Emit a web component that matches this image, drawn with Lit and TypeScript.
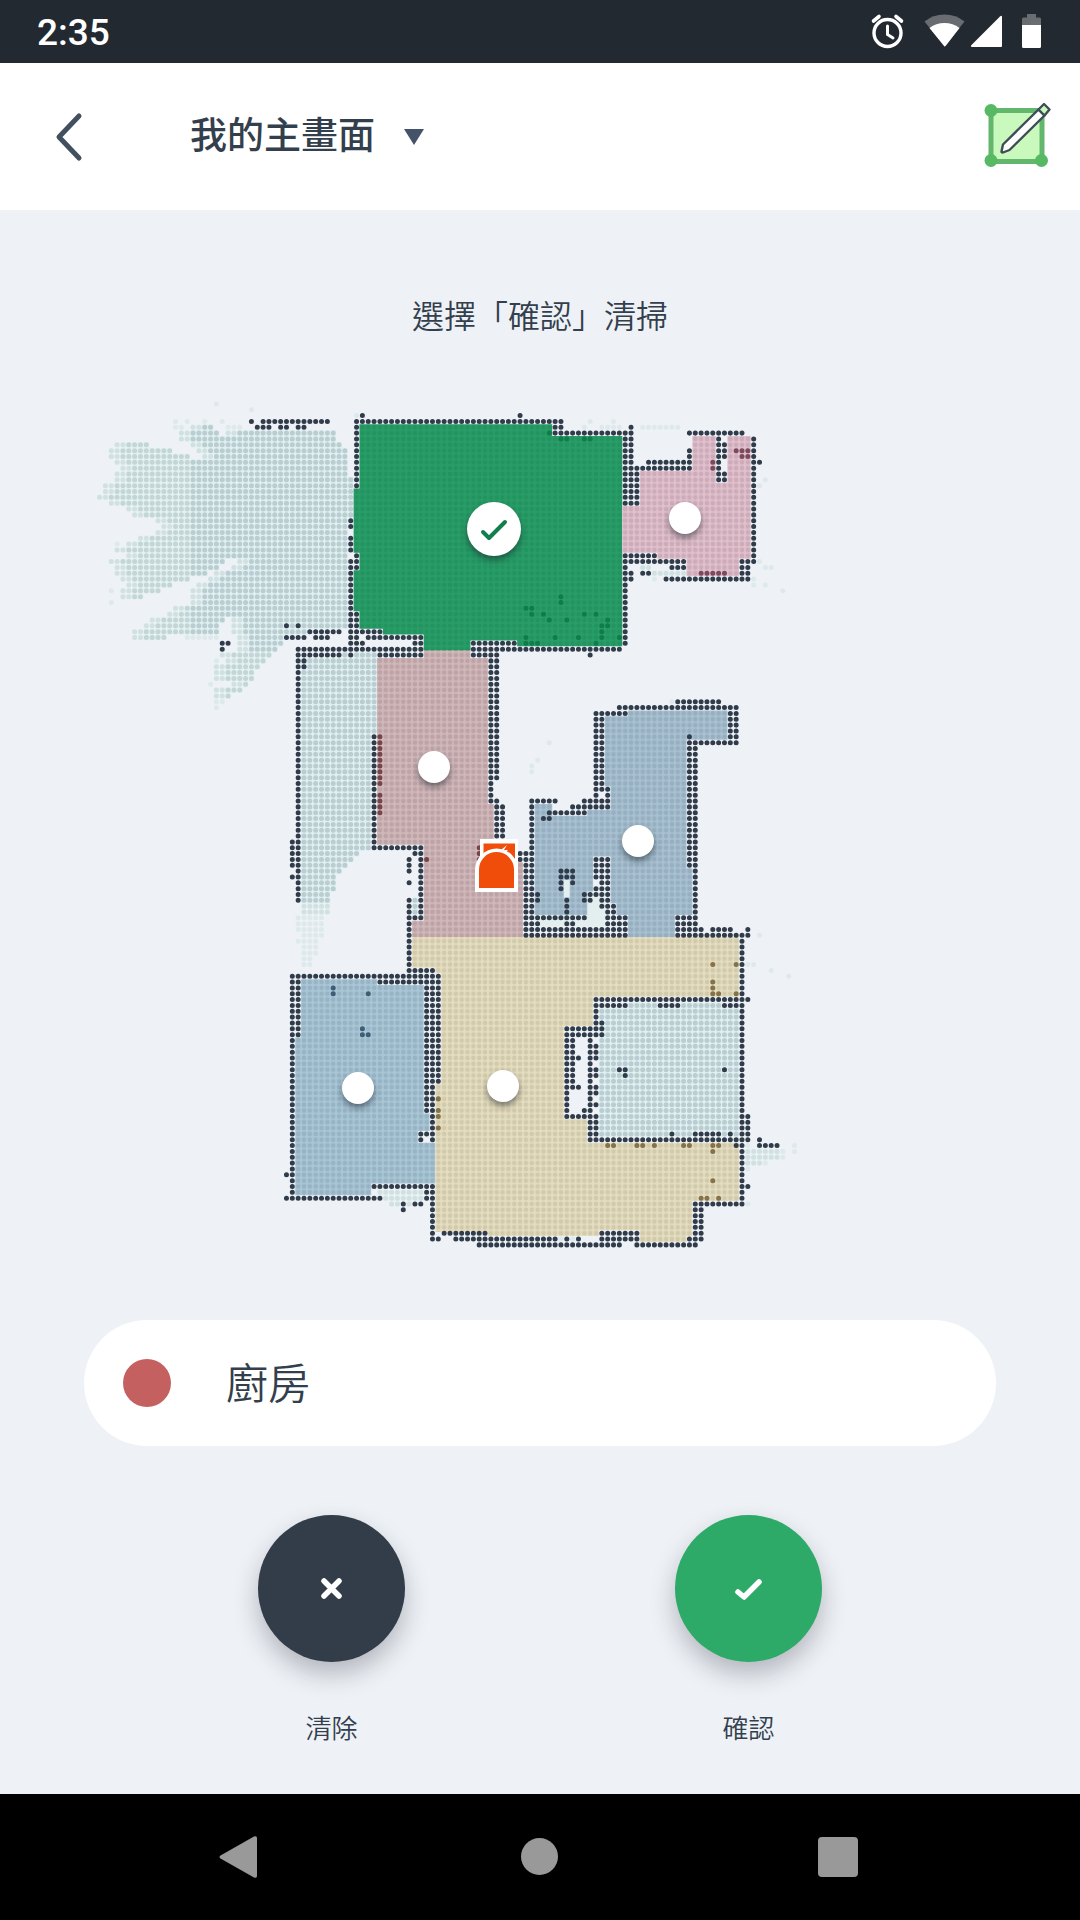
import { LitElement, html, css, svg } from "lit";
import { customElement, property, state } from "lit/decorators.js";
import { classMap } from "lit/directives/class-map.js";
import { styleMap } from "lit/directives/style-map.js";

// The floor plan is a grid of square cells. A line is "rows: columns", listing the filled ranges.
type Cell = [number, number];

function parseRuns(source: string): Cell[][] {
  const runs: Cell[][] = [];
  for (const line of source.trim().split("\n")) {
    const [rows, cols] = line.split(":");
    const [r0, r1 = r0] = rows.trim().split("-").map(Number);
    for (let r = r0; r <= r1; r++) {
      for (const part of cols.trim().split(/\s+/)) {
        const [c0, c1 = c0] = part.split("-").map(Number);
        const run: Cell[] = [];
        for (let c = c0; c <= c1; c++) run.push([c, r]);
        runs.push(run);
      }
    }
  }
  return runs;
}

const dots = (cells: Cell[]) => cells.map(([c, r]) => `M${c + 0.5} ${r + 0.5}h0`).join("");
const squares = (cells: Cell[]) => cells.map(([c, r]) => `M${c} ${r}h1v1h-1z`).join("");

const WALLS = parseRuns(`
2: 47 74
3: 28 30-41 46-81
4: 29-31 33-34 36-37 80-81 93
5: 80-93 103-112
4-14: 46
6-17: 92-93
11-17: 94
10: 96-103
11: 95-103
8-9: 103
6-13: 108
7-9: 109
12-13: 109
6-27: 114
10: 115
20-21: 45
23-25: 45
26-28: 46
27-43: 45
36-41: 46
26: 92-97
27: 92-102 112-113
28: 92 100-102 112-113
29: 92-93 95-96 112-113
30: 92-93 99-113
31-41: 92
38: 34 36
39: 38-43 47-50
40: 34-37 39-41 48-57
41: 23-24 47 56-57 66-73
42: 23 36-57 66-91
43: 36-43 50-57 66-70 86
44-45: 36-37
46-85: 36
44-64: 69-70
65-67: 69
68: 69-70
69-74: 70-71
75-79: 35
81: 35
57-76: 49
76: 50-57
77: 56
77-88: 57
78-80: 55
82: 55
85-97: 55
88: 56
97: 56-59
77-78: 74
77-91: 75
68-91: 76
51: 101-108
52: 91-111
53: 87-92
54-65: 87-88
53-58: 110-111
57: 103
58: 103-109
59-79: 103-104
80-91: 104
66: 87-89
67: 87 89
68: 77-80 85-89
69: 83-89
70: 79-85
71: 78-79
78-81: 87-89
80-81: 81-83
82: 81 83 88-89
83: 81 87-89
84: 77 85-89
85: 77 85-86 88-89
86: 88-90
87: 89-90
88: 77-85 89-92 101-103
89: 77 82-83 89-92 101-103
90: 77-92 101-103 105 107-110 113
91: 77-92 101-103 105-113
85-87: 82
92-137: 112
98: 35-60
99: 35-36 50-60
100-108: 35-36
109-136: 35
100-116: 58-60
117-121: 58-59
122-124: 59
125: 57-59
126: 57 59
132: 34
134: 49-59
135: 58-59
136: 34 36-50 58-59
137: 54 56-57 59
138: 54 59
139-143: 59
142: 61-68
143: 60 63-80 82 84
144: 67-91 94-104
142-143: 88-94
143: 103
137: 104-111
138-143: 104-105
102: 87-111 113
103: 87-92 98-101 109-111
104-105: 87
106: 87-88
107-108: 82-88
109: 82-83 86
110-111: 82-83 86-87
112: 82-84 86-87
113: 82-83 86
114: 82-83 86-87 91-92 109
115: 82-83 86-87 92
116: 82-83 86
117: 82-84 86-87
118: 82 86-87
119: 82 86
120: 82 86-87
121: 82 85-86
122: 82-87 113
123-124: 86-87 113
125: 86-87 100 104-108 110 113
126: 86-111 113 115
127: 111 115-118
134: 113
`).flat();

// Obstacles that stand inside a coloured room.
const OBSTACLES: Array<[string, string]> = [
  ["green", `
5: 79
6: 81-82 85-86
33-34: 81
35: 75-76
36: 76 78 85 87
37: 79 82 89
38: 88-89
39: 88
40: 75 80 84 88 91
41: 75-77 87`],
  ["pink", `
8: 111-113
9: 112-113
10-11: 107
29: 105-109`],
  ["red", `
57-65: 50
67-70: 50
76-78: 67
78: 58`],
  ["steel", `
100: 42
101: 42 48
107: 47
108: 47-48`],
  ["sand", `
96: 107 111
99-100: 107
101: 107-108 111
119: 60
121-122: 60
124: 60
127: 89-90 94-95 97 102-103 107-108
128: 107
133: 107
136: 105-106 108`],
];

// Scanned floor that belongs to no room: each run thins out at its left end.
const OPEN_FLOOR = parseRuns(`
4: 18-21
5: 16-22 24-42
6: 16-42
7: 5-10 18-43
8: 4-14 19-44
9: 4-17 20-44
10: 5-44
11: 6-44
12: 5-44
13: 5-45
14-15: 3-45
16: 2-45
17: 4-45
18: 7-45
19: 8-45
20: 12-44
21: 13-44
22: 12-44
23: 9-44
24: 7-44
25: 5-44
26: 7-44
27: 4-23 26-44
28: 5-22 25-44
29: 5-20 22-44
30: 6-17 21-44
31: 7-14 19-44
32: 6-12 18-44
33: 6-9 18-44
34: 18-44
35: 15-44
36: 14-44
37: 11-23 25-44
38: 10-22 25-44
39: 8-22 25-37
40: 8-13 26-33
41: 26-33
42: 26-32
43: 23-31
44: 24-30
45: 22-29
46: 22-28
47: 22-28
48: 25-27
49: 22-26
50: 22-24
`);

const CLOSED_FLOOR = parseRuns(`
43: 44 46-49
44-56: 37-49
57-75: 37-48
76: 37-48
77: 37-46
78: 37-45
79: 37-44
80: 37-43
81-83: 37-42
84-85: 37-41
103: 93-97 102-108
104-124: 88-111
125: 88-99 101-103 109 111
85-87: 56
`).flat();

const TRAILING = parseRuns(`
28: 95-96
29: 97-102
86-87: 37-41
128: 113-118
129: 113-118
130: 113-115
135: 50-57
136: 51-57
137: 52-53 55
`).flat();

const FAINT = parseRuns(`
0: 22
1: 28
2: 46
3: 15 17 20 23 86 90
4: 15-16 24-26 85 88-91 95-101
13: 116
14: 115
24: 5
27: 115
28: 116-117
30: 97 114
31: 114 116
32: 4 119
34: 4
40: 17-22
44: 22
48: 21
51: 22-23
52: 22
51: 100
58: 79
61: 77
62-63: 76
88-90: 36-40
91: 37-40
92: 36-39
93-94: 37-39
95-96: 37-38
91: 115
96: 113-114
97: 117
98: 120
127: 113 121
128: 119 121
129: 119
130: 116
131: 113
137: 112-113
143: 81 83
146: 105
`).flat();

const THIN = OPEN_FLOOR.flatMap((run) => run.slice(0, 2)).concat(TRAILING);
const INNER = OPEN_FLOOR.flatMap((run) => run.slice(2));
const SOFT = INNER.filter(([c, r]) => c < 18 || r > 42);
const DENSE = INNER.filter(([c, r]) => c >= 18 && r <= 42).concat(CLOSED_FLOOR);

interface Room {
  tone: string;
  name: string;
  outline: string;
  x: number;
  y: number;
}

const ROOMS: Room[] = [
  { tone: "red", name: "走廊", x: 434, y: 366, outline: "M58 42H66V44H69V69H70V75H73V79H75V91.8H56V89H58V76H50V44H58Z" },
  { tone: "green", name: "廚房", x: 494, y: 128, outline: "M47 4H80V6H92V42H74V41H66V42.7H58V40H51V39H47V36H46V29H47V26H46V15H47Z" },
  { tone: "pink", name: "浴室", x: 685, y: 117, outline: "M104 6H108V14H110V6H114V27H112V30H103V27H98V26H92V18H95V12H104Z" },
  { tone: "slate", name: "臥室", x: 638, y: 440, outline: "M93 53H110V58H103V80H104V88H101V91.8H93V88H91V86H90V78H87V84H86V88H77V69H80V71H86V70H90V66H89V54H93Z" },
  { tone: "steel", name: "書房", x: 358, y: 687, outline: "M37 99H50V100H58V122H59V125H57V127H60V134H49V136H36V109H37Z" },
  { tone: "sand", name: "客廳", x: 503, y: 685, outline: "M56 91.8H112V102H87V107H82V123H86V127H112V137H104V143H103V144H95V142H88V143H69V142.3H60V117H61V98H60V97H56Z" },
];

const MAP_WIDTH = 1080;
const MAP_HEIGHT = 850;

@customElement("floor-map")
class FloorMap extends LitElement {
  @property({ attribute: false }) selected = new Set<string>();

  static styles = css`
    :host { display: block; position: relative; }
    .plan { display: block; width: 100%; height: auto; }
    .dots { fill: none; stroke-width: 0.86; stroke-linecap: round; }
    .wall { stroke: #313c4b; }
    .dense-floor { fill: #e0f0f2; }
    .dense-dot { stroke: #bacdd0; }
    .soft-floor { fill: #e4f1f2; }
    .soft-dot { stroke: #c3d6d5; }
    .thin-floor { fill: #e9f2f4; }
    .thin-dot { stroke: #d1e0e0; }
    .faint-dot { stroke: #d3e2e3; opacity: 0.6; }
    .gap { fill: #e2efee; }
    .area.green { fill: #289d69; }
    .area.pink { fill: #dfc0cc; }
    .area.red { fill: #d0b8ba; }
    .area.slate { fill: #a8c0d0; }
    .area.steel { fill: #a8c6d6; }
    .area.sand { fill: #e5ddbf; }
    .grain-green { fill: #24945f; }
    .grain-pink { fill: #cdabb8; }
    .grain-red { fill: #bea3a6; }
    .grain-slate { fill: #96afc1; }
    .grain-steel { fill: #97b3c4; }
    .grain-sand { fill: #d2caac; }
    .obstacle.green { stroke: #0f7c4a; }
    .obstacle.pink { stroke: #7d4a5c; }
    .obstacle.red { stroke: #764449; }
    .obstacle.steel { stroke: #3c5f77; }
    .obstacle.sand { stroke: #84734a; }
    .halo { fill: #fff; }
    .robot { fill: #f04d0a; }
    .pin {
      position: absolute;
      display: grid;
      place-items: center;
      width: 32px;
      height: 32px;
      padding: 0;
      border: 0;
      border-radius: 50%;
      background: #fff;
      box-shadow: 0 4px 6px rgba(20, 30, 40, 0.5);
      transform: translate(-50%, -50%);
      cursor: pointer;
    }
    .pin.on { width: 54px; height: 54px; }
    .tick { fill: none; stroke: #0f7f4c; stroke-width: 4; stroke-linecap: round; stroke-linejoin: round; }
  `;

  private toggle(tone: string) {
    this.dispatchEvent(new CustomEvent("room-toggle", { detail: tone }));
  }

  render() {
    return html`
      <svg class="plan" viewBox="0 0 ${MAP_WIDTH} ${MAP_HEIGHT}" aria-hidden="true">
        <defs>
          ${ROOMS.map((room) => svg`
            <pattern id="grain-${room.tone}" width="1" height="1" patternUnits="userSpaceOnUse">
              <circle class="grain-${room.tone}" cx="0.5" cy="0.5" r="0.4"></circle>
            </pattern>`)}
        </defs>
        <g transform="translate(85 0) scale(5.84)">
          <path class="thin-floor" d=${squares(THIN)}></path>
          <path class="soft-floor" d=${squares(SOFT)}></path>
          <path class="dense-floor" d=${squares(DENSE)}></path>
          <path class="dots faint-dot" d=${dots(FAINT)}></path>
          <path class="dots thin-dot" d=${dots(THIN)}></path>
          <path class="dots soft-dot" d=${dots(SOFT)}></path>
          <path class="dots dense-dot" d=${dots(DENSE)}></path>
          <path class="gap" d="M86 84H89V90H86zM77 88H89V90H77z"></path>
          ${ROOMS.map((room) => svg`
            <path class="area ${room.tone}" d=${room.outline}></path>
            <path fill="url(#grain-${room.tone})" d=${room.outline}></path>`)}
          <path class="gap" d="M82 82H83V85H82z"></path>
          ${OBSTACLES.map(([tone, runs]) => svg`
            <path class="dots obstacle ${tone}" d=${dots(parseRuns(runs).flat())}></path>`)}
          <path class="dots wall" d=${dots(WALLS)}></path>
        </g>
        <path class="halo" d="M480 438H518V470H480z"></path>
        <path class="robot" d="M483.500 442.500H515V468H483.500z"></path>
        <path class="halo" d="M507 444L501 449H505L502 455L508 449H504z"></path>
        <path class="halo" d="M475 491V469A21 21 0 0 1 518 469V491z"></path>
        <path class="robot" d="M479 487V468.500A17 17 0 0 1 514 468.500V487z"></path>
      </svg>
      ${ROOMS.map((room) => {
        const on = this.selected.has(room.tone);
        return html`
          <button
            class=${classMap({ pin: true, on })}
            style=${styleMap({ left: `${(room.x / MAP_WIDTH) * 100}%`, top: `${(room.y / MAP_HEIGHT) * 100}%` })}
            aria-label=${room.name}
            aria-pressed=${on ? "true" : "false"}
            @click=${() => this.toggle(room.tone)}
          >
            ${on ? html`<svg width="32" height="32" viewBox="-16 -16 32 32"><path class="tick" d="M-11 3L-5 9L11 -7"></path></svg>` : ""}
          </button>`;
      })}
    `;
  }
}

@customElement("app-root")
class AppRoot extends LitElement {
  @state() private selected = new Set(["green"]);

  static styles = css`
    :host {
      display: flex;
      flex-direction: column;
      min-height: 100vh;
      background: #eef2f7;
      color: #343f4d;
      font-family: Roboto, "Noto Sans CJK TC", sans-serif;
      font-weight: 350;
    }
    button, select { font: inherit; color: inherit; cursor: pointer; }
    svg { display: block; }
    .status {
      display: flex;
      align-items: center;
      justify-content: space-between;
      height: 63px;
      padding: 0 36px 0 37px;
      background: #222930;
      color: #fff;
    }
    .time { font-size: 37px; font-weight: 500; line-height: 60px; padding-top: 3px; }
    .bar { display: flex; align-items: center; height: 147px; background: #fff; }
    .back { width: 190px; padding: 24px 54px; border: 0; background: none; }
    .stroke { fill: none; stroke: #414f5f; stroke-width: 5; stroke-linecap: round; stroke-linejoin: round; }
    .picker { display: grid; align-items: center; }
    .picker > * { grid-area: 1 / 1; }
    .choice {
      appearance: none;
      padding: 0 49px 0 0;
      border: 0;
      background: none;
      font-size: 37px;
      font-weight: 500;
      line-height: 54px;
    }
    .caret { justify-self: end; fill: #45536a; pointer-events: none; }
    .edit { margin-left: auto; padding: 10px 29px 14px; border: 0; background: none; }
    .content { flex: 1; display: flex; flex-direction: column; padding: 83px 0 47px; }
    .hint { margin: 0 0 60px; font-size: 32px; font-weight: inherit; line-height: 48px; text-align: center; }
    .room {
      display: flex;
      align-items: center;
      gap: 55px;
      height: 126px;
      margin: 69px 84px;
      padding: 0 39px;
      border-radius: 63px;
      background: #fff;
      font-size: 42px;
    }
    .name { padding-bottom: 6px; }
    .swatch { width: 48px; height: 48px; border-radius: 50%; background: #c56060; }
    .actions { display: flex; justify-content: center; gap: 270px; }
    .action { display: flex; flex-direction: column; align-items: center; gap: 49px; width: 147px; font-size: 26px; line-height: 36px; }
    .round {
      display: grid;
      place-items: center;
      width: 147px;
      height: 147px;
      padding: 0;
      border: 0;
      border-radius: 50%;
      box-shadow: 0 12px 24px rgba(30, 30, 40, 0.28);
    }
    .dark { background: #333d4a; }
    .go { background: #2da968; }
    .mark { fill: none; stroke: #fff; stroke-width: 5.5; stroke-linecap: round; stroke-linejoin: round; }
    .nav { display: flex; align-items: center; justify-content: center; gap: 240px; height: 126px; background: #000; }
    .key { width: 60px; height: 60px; padding: 0; border: 0; background: none; fill: #999; }
  `;

  private toggle(event: CustomEvent<string>) {
    const next = new Set(this.selected);
    if (!next.delete(event.detail)) next.add(event.detail);
    this.selected = next;
  }

  private clear() {
    this.selected = new Set();
  }

  render() {
    return html`
      <div class="status">
        <span class="time">2:35</span>
        <svg width="176" height="40" viewBox="868 12 176 40" fill="#fff" aria-hidden="true">
          <g fill="none" stroke="#fff" stroke-linecap="round">
            <circle cx="887.500" cy="33" r="13.500" stroke-width="3.400"></circle>
            <path d="M887.500 26V34.500L893 38" stroke-width="3"></path>
            <path d="M873.500 21L879 16.500M901.500 21L896 16.500" stroke-width="3.600"></path>
          </g>
          <path opacity=".32" d="M944.500 46.500L924.500 21.500Q933 14.500 944.500 14.500T964.500 21.500z"></path>
          <path d="M944.500 46.500L929.500 28Q936 23 944.500 23T959.500 28L946 45.500Q944.500 47 944.500 46.500z"></path>
          <path d="M1002 17V46Q1002 47 1001 47H972Q970 46.500 971.500 45L1000 16.500Q1002 15 1002 17z"></path>
          <path opacity=".32" d="M1027 14H1036V17.500H1039.500Q1041 17.500 1041 19V25.500H1022V19Q1022 17.500 1023.500 17.500H1027z"></path>
          <path d="M1022 25H1041V46.500Q1041 48 1039.500 48H1023.500Q1022 48 1022 46.500z"></path>
        </svg>
      </div>

      <header class="bar">
        <button class="back" aria-label="返回">
          <svg width="30" height="52" viewBox="0 0 30 52"><path class="stroke" d="M25 5L5 26L25 47"></path></svg>
        </button>
        <div class="picker">
          <select class="choice" aria-label="地圖">
            <option>我的主畫面</option>
          </select>
          <svg class="caret" width="20" height="16" viewBox="0 0 20 16"><path d="M0 0H20L10 16z"></path></svg>
        </div>
        <button class="edit" aria-label="編輯">
          <svg width="68" height="68" viewBox="983 101 68 68">
            <rect x="991" y="110.500" width="51" height="51" fill="#c9f9bc" stroke="#62b76c" stroke-width="5"></rect>
            <g fill="#57b964">
              <circle cx="991" cy="110.500" r="6.500"></circle>
              <circle cx="991" cy="160.500" r="6.500"></circle>
              <circle cx="1041.500" cy="160.500" r="6.500"></circle>
            </g>
            <g stroke="#3f4d57" stroke-width="2.400" stroke-linejoin="round">
              <path fill="#fff" d="M1001.500 151.500L1003 144.500L1038.500 109.500L1044.500 115.500L1009.500 150L1003 152.500Q1001.500 152.500 1001.500 151.500z"></path>
              <path fill="#c9f9bc" d="M1038.500 109.500L1044 104L1049.500 109.500L1044.500 115.500z"></path>
            </g>
          </svg>
        </button>
      </header>

      <main class="content">
        <h1 class="hint">選擇「確認」清掃</h1>
        <floor-map .selected=${this.selected} @room-toggle=${this.toggle}></floor-map>
        <div class="room"><span class="swatch"></span><span class="name">廚房</span></div>
        <div class="actions">
          <div class="action">
            <button class="round dark" aria-labelledby="clear" @click=${this.clear}>
              <svg width="32" height="32" viewBox="-16 -16 32 32"><path class="mark" d="M-8 -8L7 7M7 -8L-8 7"></path></svg>
            </button>
            <span id="clear">清除</span>
          </div>
          <div class="action">
            <button class="round go" aria-labelledby="confirm">
              <svg width="32" height="32" viewBox="-16 -16 32 32"><path class="mark" d="M-11 3L-5 8L10 -7"></path></svg>
            </button>
            <span id="confirm">確認</span>
          </div>
        </div>
      </main>

      <nav class="nav">
        <button class="key" aria-label="上一頁">
          <svg width="60" height="60" viewBox="0 0 60 60"><path d="M10.500 28.500L44 9.500Q47 8.500 47 11V49Q47 51.500 44 50.500L10.500 31.500Q8.500 30 10.500 28.500z"></path></svg>
        </button>
        <button class="key" aria-label="主畫面">
          <svg width="60" height="60" viewBox="0 0 60 60"><circle cx="29.500" cy="29.500" r="18.500"></circle></svg>
        </button>
        <button class="key" aria-label="最近使用">
          <svg width="60" height="60" viewBox="0 0 60 60"><rect x="8" y="10" width="40" height="40" rx="4"></rect></svg>
        </button>
      </nav>
    `;
  }
}
